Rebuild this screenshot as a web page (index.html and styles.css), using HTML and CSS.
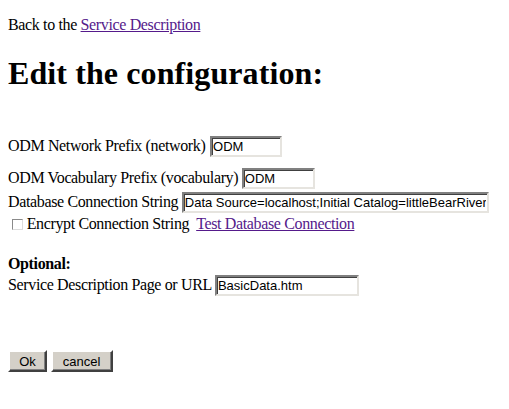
FILE: index.html
```html
<!DOCTYPE html>
<html>
<head>
<meta charset="utf-8">
<title>Edit the configuration</title>
<link rel="stylesheet" href="styles.css">
</head>
<body>
<p class="back">Back to the <a href="#" class="link">Service Description</a></p>
<h1 class="title">Edit the configuration:</h1>
<form class="form">
  <div class="row row-network">ODM Network Prefix (network) <input class="field field-network" type="text" value="ODM"></div>
  <div class="row row-vocab">ODM Vocabulary Prefix (vocabulary) <input class="field field-vocab" type="text" value="ODM"></div>
  <div class="row row-db">Database Connection String <input class="field field-db" type="text" value="Data Source=localhost;Initial Catalog=littleBearRiver;User Id=sa"></div>
  <div class="row row-encrypt"><input class="check" type="checkbox"> Encrypt Connection String&nbsp; <a href="#" class="link">Test Database Connection</a></div>
  <div class="row row-optional"><b>Optional:</b></div>
  <div class="row row-service">Service Description Page or URL <input class="field field-service" type="text" value="BasicData.htm"></div>
  <div class="row row-buttons"><button class="btn btn-ok" type="button">Ok</button> <button class="btn btn-cancel" type="button">cancel</button></div>
</form>
</body>
</html>
```
FILE: styles.css
```css
html, body {
  background: #ffffff;
}
body {
  margin: 0 8px 8px 8px;
  padding: 0;
  font-family: "Liberation Serif", "Times New Roman", serif;
  font-size: 16px;
  line-height: 18px;
  letter-spacing: -0.36px;
  color: #000000;
}
.back {
  margin: 16px 0 16px 0;
}
.link {
  color: #551a8b;
  text-decoration: underline;
}
.title {
  font-size: 32px;
  line-height: 37px;
  font-weight: bold;
  letter-spacing: 0.1px;
  margin: 21px 0 0 0;
}
.form {
  margin: 0;
}
.row {
  white-space: nowrap;
}
.field {
  font-family: "Liberation Sans", Arial, sans-serif;
  font-size: 13px;
  letter-spacing: 0;
  height: 21px;
  box-sizing: border-box;
  padding: 1px 1px;
  margin: 0;
  border: 2px solid;
  border-color: #808080 #e6e4df #e6e4df #808080;
  box-shadow: inset 1px 1px 0 #404040;
  background: #ffffff;
  color: #000000;
  vertical-align: baseline;
  outline: none;
}
.field-network { width: 72px; margin-left: 1px; }
.field-vocab { width: 73px; }
.field-db { width: 307px; }
.field-service { width: 144px; }
.row-network { margin-top: 44px; }
.row-vocab { margin-top: 11px; }
.row-db { margin-top: 3px; }
.row-encrypt { margin-top: 2px; }
.row-optional { margin-top: 22px; font-weight: bold; }
.row-service { margin-top: 2px; }
.row-buttons { margin-top: 54px; }
.check {
  -webkit-appearance: none;
  appearance: none;
  width: 11px;
  height: 11px;
  box-sizing: border-box;
  margin: 0 0 0 4px;
  border: 1px solid;
  border-color: #8a8a8a #dcdcdc #dcdcdc #8a8a8a;
  background: #ffffff;
  vertical-align: -1px;
}
.btn {
  font-family: "Liberation Sans", Arial, sans-serif;
  font-size: 13px;
  letter-spacing: 0;
  height: 22px;
  box-sizing: border-box;
  padding: 0;
  margin: 0;
  background: #d4d0c8;
  color: #000000;
  border: 2px solid;
  border-color: #ffffff #404040 #404040 #ffffff;
  box-shadow: inset -1px -1px 0 #808080;
  vertical-align: baseline;
}
.btn-ok { width: 39px; }
.btn-cancel { width: 62px; }
```
